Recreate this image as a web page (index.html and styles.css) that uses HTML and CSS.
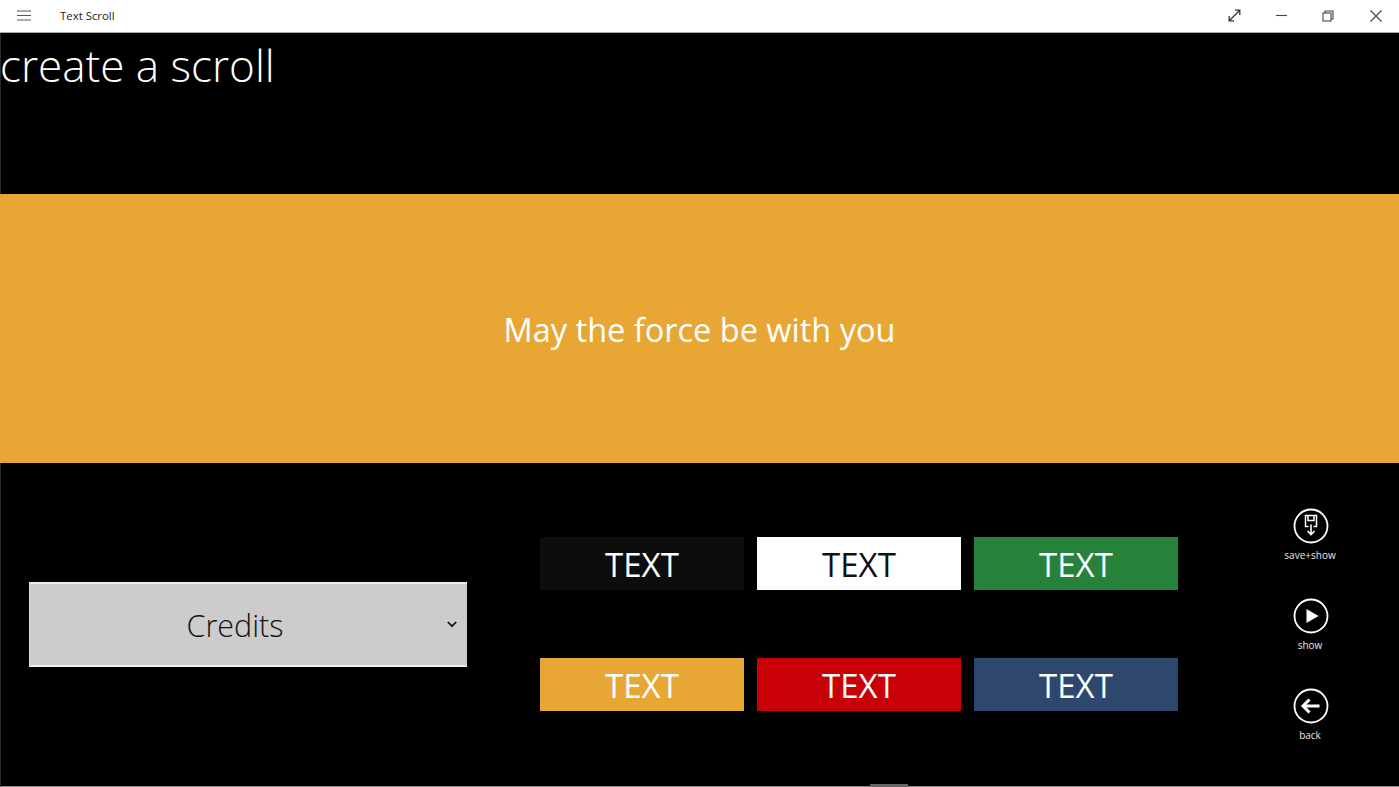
FILE: index.html
```html
<!DOCTYPE html>
<html lang="en">
<head>
<meta charset="utf-8">
<title>Text Scroll</title>
<link rel="stylesheet" href="styles.css">
</head>
<body>
<header class="titlebar">
  <div class="title-left">
    <svg class="menu-icon" width="14" height="11" viewBox="0 0 14 11"><path d="M0 1h14M0 5.500h14M0 10h14" stroke="#555" stroke-width="1.200" fill="none"/></svg>
    <span class="app-name">Text Scroll</span>
  </div>
  <div class="window-controls">
    <span class="win-btn"><svg width="13" height="13" viewBox="0 0 13 13" fill="none" stroke="#333" stroke-width="1.300"><path d="M1.500 11.500L11.500 1.500M7 1.200h4.800V6M1.200 7v4.800H6"/></svg></span>
    <span class="win-btn"><svg width="11" height="11" viewBox="0 0 11 11" fill="none" stroke="#444" stroke-width="1.100"><path d="M0 5.500h11"/></svg></span>
    <span class="win-btn win-restore"><svg width="12" height="12" viewBox="0 0 12 12" fill="none" stroke="#444" stroke-width="1.100"><rect x="1" y="3" width="8" height="8"/><path d="M3 3V1h8v8H9"/></svg></span>
    <span class="win-btn"><svg width="12" height="12" viewBox="0 0 12 12" fill="none" stroke="#444" stroke-width="1.100"><path d="M.5.5l11 11M11.500.5l-11 11"/></svg></span>
  </div>
</header>
<main class="app">
  <h1 class="page-title">create a scroll</h1>
  <section class="banner">May the force be with you</section>
  <section class="controls">
    <div class="select-box">
      <span class="select-value">Credits</span>
      <svg class="chevron" width="10" height="7" viewBox="0 0 10 7" fill="none" stroke="#111" stroke-width="1.700"><path d="M.8 1l4.200 4.200L9.200 1"/></svg>
    </div>
    <div class="swatches">
      <div class="swatch s-black">TEXT</div>
      <div class="swatch s-white">TEXT</div>
      <div class="swatch s-green">TEXT</div>
      <div class="swatch s-amber">TEXT</div>
      <div class="swatch s-red">TEXT</div>
      <div class="swatch s-navy">TEXT</div>
    </div>
    <nav class="actions">
      <div class="action">
        <svg width="36" height="36" viewBox="0 0 36 36" fill="none" stroke="#fff"><circle cx="18" cy="18" r="16.500" stroke-width="1.800"/><path d="M15.500 18.500h-3V7.500h11v11h-3" stroke-width="1.500"/><path d="M15 8v4.500h6V8" stroke-width="1.500"/><path d="M18 16.500v10M14.500 23l3.500 3.500 3.500-3.500" stroke-width="1.600"/></svg>
        <span>save+show</span>
      </div>
      <div class="action">
        <svg width="36" height="36" viewBox="0 0 36 36" fill="none" stroke="#fff"><circle cx="18" cy="18" r="16.500" stroke-width="1.800"/><path d="M13.500 11L25.500 18l-12 7z" fill="#fff" stroke="none"/></svg>
        <span>show</span>
      </div>
      <div class="action">
        <svg width="36" height="36" viewBox="0 0 36 36" fill="none" stroke="#fff"><circle cx="18" cy="18" r="16.500" stroke-width="1.800"/><path d="M10 18h16.500M16.500 11.500L10 18l6.500 6.500" stroke-width="3"/></svg>
        <span>back</span>
      </div>
    </nav>
  </section>
  <div class="grabber"></div>
</main>
</body>
</html>
```
FILE: styles.css
```css
* { box-sizing: border-box; }
html, body { margin: 0; height: 100%; overflow: hidden; background: #000; }
body { font-family: "Open Sans", "Noto Sans", sans-serif; }

.titlebar {
  height: 33px;
  background: #fff;
  border-bottom: 1px solid #aaa;
  display: flex;
  justify-content: space-between;
  align-items: center;
  padding-bottom: 1px;
}
.title-left { display: flex; align-items: center; }
.menu-icon { margin-left: 17px; }
.app-name { margin-left: 29px; font-size: 11.400px; line-height: 17px; color: #222; }
.window-controls { display: flex; }
.win-btn { width: 47px; height: 32px; display: flex; align-items: center; justify-content: center; }
.win-restore { padding-right: 2px; }

.app {
  height: 754px;
  display: flex;
  flex-direction: column;
  border-left: 1px solid #2a2a2a;
  border-bottom: 1px solid #888;
  position: relative;
}
.page-title {
  margin: 0 0 0 -1px;
  height: 161px;
  font-size: 44px;
  font-weight: 350;
  line-height: 65px;
  color: #fff;
}
.banner {
  height: 269px;
  background: #e8a735;
  color: #fff;
  font-size: 32.500px;
  display: flex;
  align-items: center;
  justify-content: center;
  margin-left: -1px;
  padding-top: 1px;
}
.controls {
  flex: 1;
  display: flex;
  align-items: flex-start;
}
.select-box {
  width: 438px;
  height: 85px;
  margin: 119px 0 0 28px;
  background: #ccc;
  border-top: 2px solid #eee;
  border-bottom: 2px solid #eee;
  border-left: 1px solid #ddd;
  display: flex;
  align-items: center;
}
.select-value {
  width: 410px;
  text-align: center;
  font-size: 30.500px;
  font-weight: 350;
  color: #111;
}
.chevron { margin-left: 7px; }
.swatches {
  width: 639px;
  margin: 74px 0 0 73px;
  display: grid;
  grid-template-columns: repeat(3, 204px);
  column-gap: 13px;
  row-gap: 68px;
}
.swatch {
  height: 53px;
  display: flex;
  align-items: center;
  justify-content: center;
  font-size: 33px;
  color: #fff;
  padding-top: 2px;
}
.s-black { background: #0d0d0d; }
.s-white { background: #fff; color: #111; }
.s-green { background: #26823b; }
.s-amber { background: #e8a735; }
.s-red { background: #c80008; }
.s-navy { background: #2e486d; }
.actions {
  margin: 45px 0 0 96px;
  width: 70px;
  display: flex;
  flex-direction: column;
  gap: 20px;
}
.action {
  height: 70px;
  display: flex;
  flex-direction: column;
  align-items: center;
  color: #e8e8e8;
  font-size: 10px;
  line-height: 14px;
}
.action svg { margin-bottom: 4px; margin-left: 1px; }
.grabber {
  position: absolute;
  left: 869px;
  bottom: -1px;
  width: 38px;
  height: 3px;
  background: #666;
}
```
